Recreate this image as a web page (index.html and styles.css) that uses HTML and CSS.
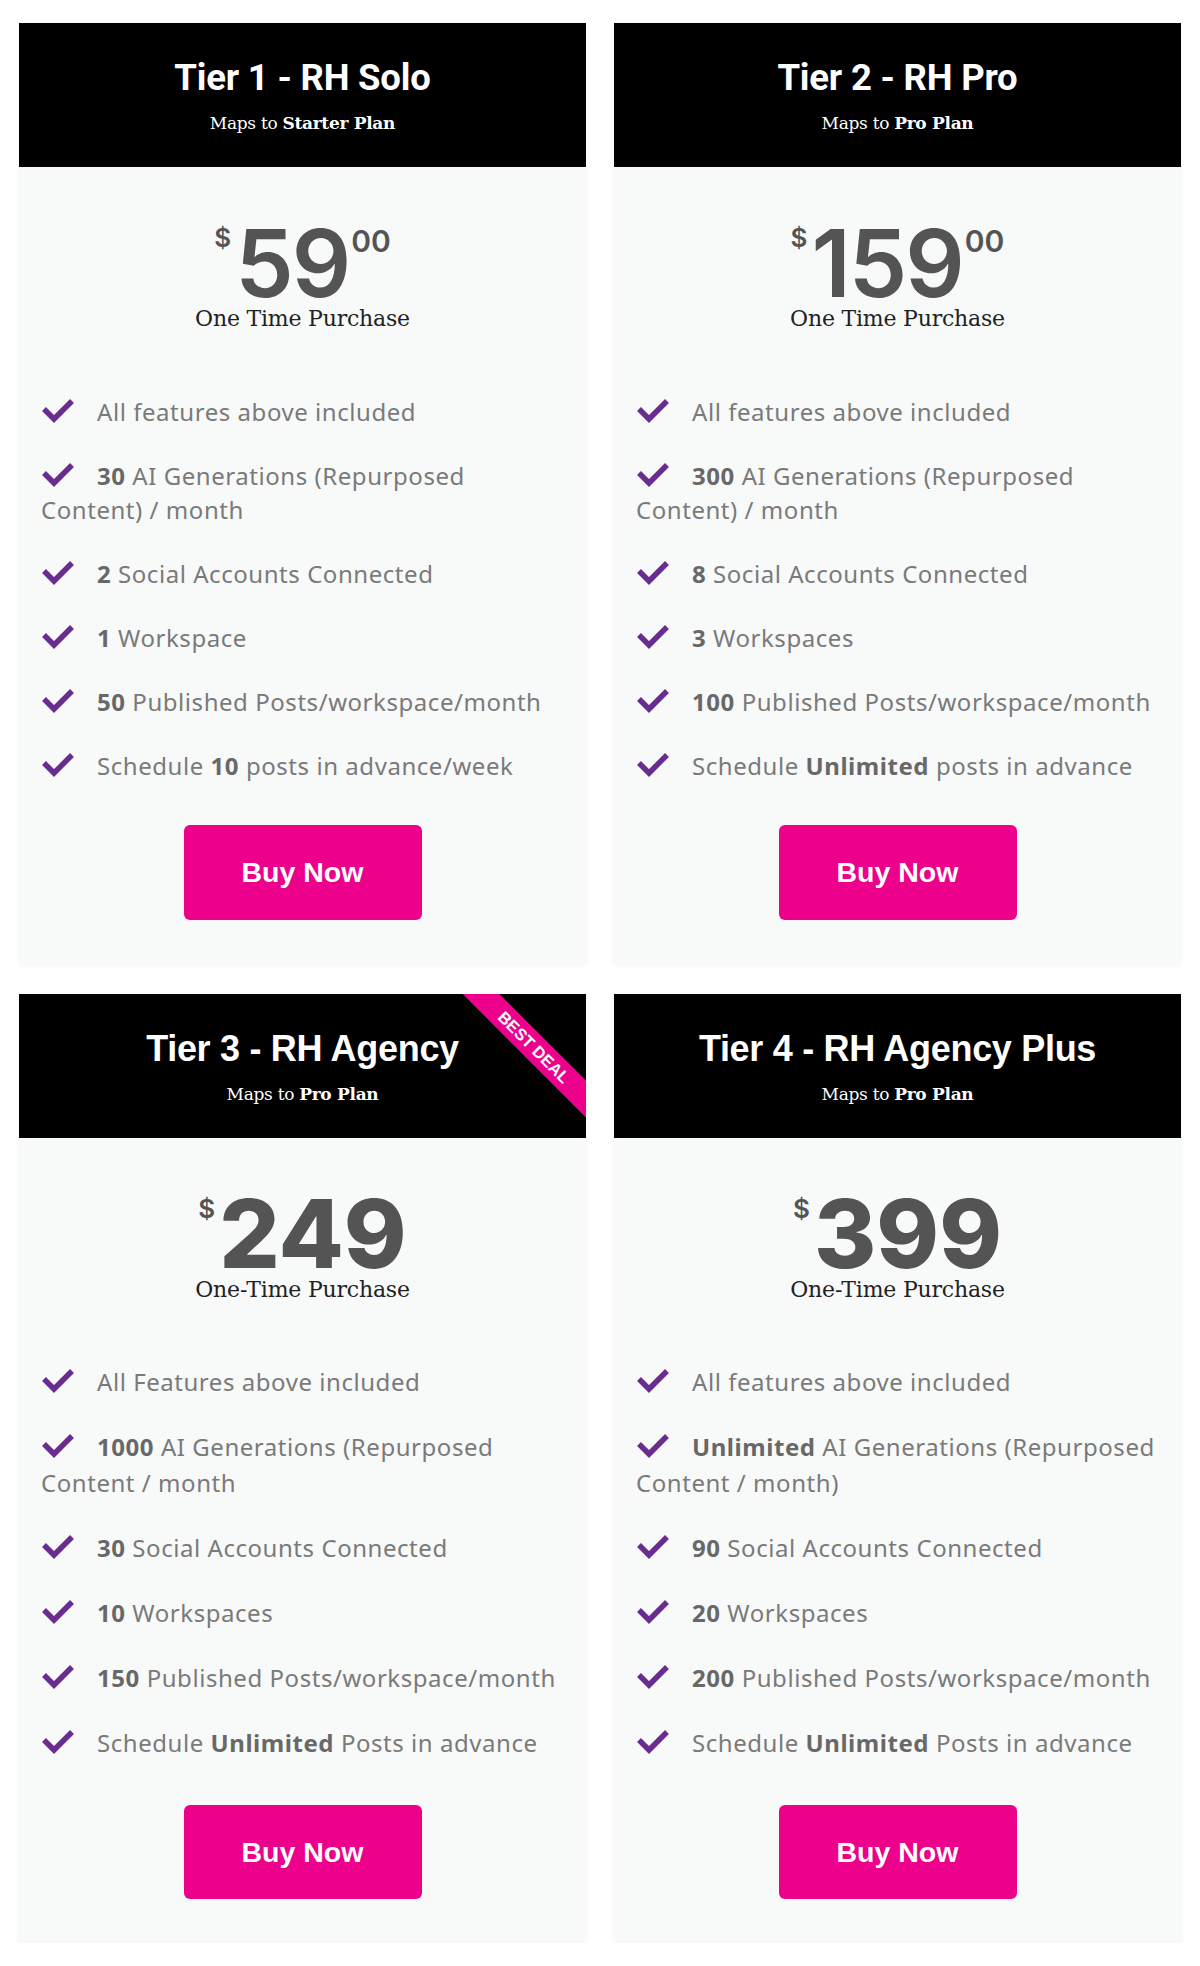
FILE: index.html
```html
<!DOCTYPE html>
<html lang="en">
<head>
<meta charset="utf-8">
<title>Pricing</title>
<link rel="stylesheet" href="styles.css">
</head>
<body>
<div class="grid">

  <div class="card">
    <div class="head">
      <h2 class="title">Tier 1 - RH Solo</h2>
      <p class="maps">Maps to <b>Starter Plan</b></p>
    </div>
    <div class="body">
      <div class="price"><span class="cur">$</span><span class="amt">59</span><span class="cents">00</span></div>
      <p class="term">One Time Purchase</p>
      <ul class="feats">
        <li><svg class="chk" viewBox="0 0 34 26"><path d="M3 12 L13 22 L31 4"/></svg>All features above included</li>
        <li><svg class="chk" viewBox="0 0 34 26"><path d="M3 12 L13 22 L31 4"/></svg><b>30</b> AI Generations (Repurposed<br>Content) / month</li>
        <li><svg class="chk" viewBox="0 0 34 26"><path d="M3 12 L13 22 L31 4"/></svg><b>2</b> Social Accounts Connected</li>
        <li><svg class="chk" viewBox="0 0 34 26"><path d="M3 12 L13 22 L31 4"/></svg><b>1</b> Workspace</li>
        <li><svg class="chk" viewBox="0 0 34 26"><path d="M3 12 L13 22 L31 4"/></svg><b>50</b> Published Posts/workspace/month</li>
        <li><svg class="chk" viewBox="0 0 34 26"><path d="M3 12 L13 22 L31 4"/></svg>Schedule <b>10</b> posts in advance/week</li>
      </ul>
      <a class="buy" href="#">Buy Now</a>
    </div>
  </div>

  <div class="card">
    <div class="head">
      <h2 class="title">Tier 2 - RH Pro</h2>
      <p class="maps">Maps to <b>Pro Plan</b></p>
    </div>
    <div class="body">
      <div class="price"><span class="cur">$</span><span class="amt">159</span><span class="cents">00</span></div>
      <p class="term">One Time Purchase</p>
      <ul class="feats">
        <li><svg class="chk" viewBox="0 0 34 26"><path d="M3 12 L13 22 L31 4"/></svg>All features above included</li>
        <li><svg class="chk" viewBox="0 0 34 26"><path d="M3 12 L13 22 L31 4"/></svg><b>300</b> AI Generations (Repurposed<br>Content) / month</li>
        <li><svg class="chk" viewBox="0 0 34 26"><path d="M3 12 L13 22 L31 4"/></svg><b>8</b> Social Accounts Connected</li>
        <li><svg class="chk" viewBox="0 0 34 26"><path d="M3 12 L13 22 L31 4"/></svg><b>3</b> Workspaces</li>
        <li><svg class="chk" viewBox="0 0 34 26"><path d="M3 12 L13 22 L31 4"/></svg><b>100</b> Published Posts/workspace/month</li>
        <li><svg class="chk" viewBox="0 0 34 26"><path d="M3 12 L13 22 L31 4"/></svg>Schedule <b>Unlimited</b> posts in advance</li>
      </ul>
      <a class="buy" href="#">Buy Now</a>
    </div>
  </div>

  <div class="card card-b">
    <div class="head">
      <h2 class="title">Tier 3 - RH Agency</h2>
      <p class="maps">Maps to <b>Pro Plan</b></p>
      <div class="ribbon">BEST DEAL</div>
    </div>
    <div class="body">
      <div class="price"><span class="cur">$</span><span class="amt">249</span></div>
      <p class="term">One-Time Purchase</p>
      <ul class="feats">
        <li><svg class="chk" viewBox="0 0 34 26"><path d="M3 12 L13 22 L31 4"/></svg>All Features above included</li>
        <li><svg class="chk" viewBox="0 0 34 26"><path d="M3 12 L13 22 L31 4"/></svg><b>1000</b> AI Generations (Repurposed<br>Content / month</li>
        <li><svg class="chk" viewBox="0 0 34 26"><path d="M3 12 L13 22 L31 4"/></svg><b>30</b> Social Accounts Connected</li>
        <li><svg class="chk" viewBox="0 0 34 26"><path d="M3 12 L13 22 L31 4"/></svg><b>10</b> Workspaces</li>
        <li><svg class="chk" viewBox="0 0 34 26"><path d="M3 12 L13 22 L31 4"/></svg><b>150</b> Published Posts/workspace/month</li>
        <li><svg class="chk" viewBox="0 0 34 26"><path d="M3 12 L13 22 L31 4"/></svg>Schedule <b>Unlimited</b> Posts in advance</li>
      </ul>
      <a class="buy" href="#">Buy Now</a>
    </div>
  </div>

  <div class="card card-b">
    <div class="head">
      <h2 class="title">Tier 4 - RH Agency Plus</h2>
      <p class="maps">Maps to <b>Pro Plan</b></p>
    </div>
    <div class="body">
      <div class="price"><span class="cur">$</span><span class="amt">399</span></div>
      <p class="term">One-Time Purchase</p>
      <ul class="feats">
        <li><svg class="chk" viewBox="0 0 34 26"><path d="M3 12 L13 22 L31 4"/></svg>All features above included</li>
        <li><svg class="chk" viewBox="0 0 34 26"><path d="M3 12 L13 22 L31 4"/></svg><b>Unlimited</b> AI Generations (Repurposed<br>Content / month)</li>
        <li><svg class="chk" viewBox="0 0 34 26"><path d="M3 12 L13 22 L31 4"/></svg><b>90</b> Social Accounts Connected</li>
        <li><svg class="chk" viewBox="0 0 34 26"><path d="M3 12 L13 22 L31 4"/></svg><b>20</b> Workspaces</li>
        <li><svg class="chk" viewBox="0 0 34 26"><path d="M3 12 L13 22 L31 4"/></svg><b>200</b> Published Posts/workspace/month</li>
        <li><svg class="chk" viewBox="0 0 34 26"><path d="M3 12 L13 22 L31 4"/></svg>Schedule <b>Unlimited</b> Posts in advance</li>
      </ul>
      <a class="buy" href="#">Buy Now</a>
    </div>
  </div>

</div>
</body>
</html>
```

FILE: styles.css
```css
* { box-sizing: border-box; }

body {
  margin: 0;
  background: #ffffff;
  font-family: "Noto Sans", "DejaVu Sans", sans-serif;
}

.grid {
  display: grid;
  grid-template-columns: 567px 567px;
  column-gap: 28px;
  row-gap: 30px;
  padding: 23px 19px 0 19px;
}

.card {
  display: flex;
  flex-direction: column;
  background: #f8f9f9;
  box-shadow: 0 1px 5px rgba(0, 0, 0, 0.05);
}

.head {
  position: relative;
  overflow: hidden;
  background: #000;
  height: 144px;
  padding-top: 35px;
  text-align: center;
  color: #fff;
}

.title {
  margin: 0;
  font-family: Roboto, "Liberation Sans", sans-serif;
  font-weight: 700;
  font-size: 36.5px;
  line-height: 40px;
  letter-spacing: -0.2px;
}

.card-b .title {
  font-family: "Liberation Sans", Arial, sans-serif;
  font-size: 36px;
  letter-spacing: -0.3px;
}

.maps {
  margin: 14px 0 0;
  font-family: "DejaVu Serif", "Liberation Serif", serif;
  font-size: 17px;
  line-height: 22px;
  letter-spacing: -0.3px;
}

.maps b { font-weight: 700; }

.ribbon {
  position: absolute;
  top: 40px;
  right: -48px;
  width: 200px;
  height: 26px;
  background: #ec008c;
  color: #fff;
  transform: rotate(45deg);
  font-family: "Liberation Sans", Arial, sans-serif;
  font-weight: 700;
  font-size: 16.5px;
  line-height: 26px;
  text-align: center;
}

.body {
  flex: 1;
  display: flex;
  flex-direction: column;
  padding: 56px 12px 44px 22px;
}

.price {
  display: flex;
  justify-content: center;
  align-items: flex-start;
  color: #545454;
  font-family: Inter, "Liberation Sans", sans-serif;
  padding-right: 10px;
}

.cur {
  font-size: 26px;
  line-height: 30px;
  font-weight: 600;
  margin-top: 0;
  margin-right: 4px;
}

.amt {
  font-size: 93px;
  line-height: 80px;
  font-weight: 600;
  letter-spacing: -2px;
}

.cents {
  font-size: 30px;
  line-height: 30px;
  font-weight: 600;
  margin-top: 3px;
  margin-left: 2px;
}

.card-b .amt {
  font-weight: 800;
  font-size: 95px;
  letter-spacing: 0;
}

.term {
  margin: 3px 0 0;
  padding-right: 10px;
  text-align: center;
  font-family: "DejaVu Serif", "Liberation Serif", serif;
  font-size: 22px;
  line-height: 26px;
  color: #222;
  letter-spacing: -0.2px;
}

.feats {
  list-style: none;
  margin: 63px 0 0;
  padding: 0;
  display: flex;
  flex-direction: column;
  gap: 30px;
  color: #7a7a7a;
  font-size: 24px;
  letter-spacing: 0.55px;
  line-height: 34px;
}

.card-b .feats {
  margin-top: 61px;
  gap: 29px;
  line-height: 36px;
}

.feats b {
  font-weight: 700;
  color: #686868;
}

.chk {
  width: 34px;
  height: 26px;
  vertical-align: -2px;
  margin-right: 22px;
  fill: none;
  stroke: #6a2c8e;
  stroke-width: 5.5;
}

.buy {
  align-self: center;
  margin-top: 42px;
  margin-right: 10px;
  width: 238px;
  height: 95px;
  display: flex;
  align-items: center;
  justify-content: center;
  background: #ec008c;
  border-radius: 6px;
  color: #fff;
  text-decoration: none;
  font-family: "Liberation Sans", Arial, sans-serif;
  font-weight: 700;
  font-size: 28.5px;
}

.card-b .buy {
  margin-top: 44px;
  height: 94px;
}
```
